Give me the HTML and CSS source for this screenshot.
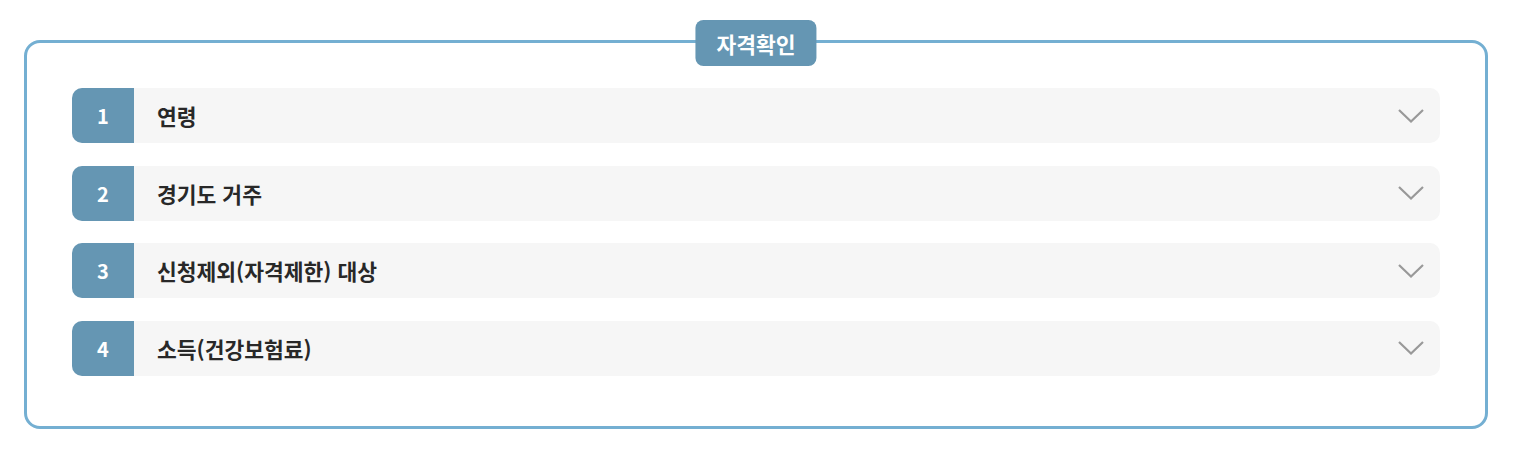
FILE: index.html
```html
<!DOCTYPE html>
<html lang="ko">
<head>
  <meta charset="UTF-8">
  <meta name="viewport" content="width=device-width, initial-scale=1.0">
  <title>자격확인</title>
  <link rel="stylesheet" href="styles.css">
</head>
<body>
  <main class="main">
    <section class="check-box">
      <h2 class="check-title">자격확인</h2>

      <div class="check-list">
        <div class="check-item">
          <span class="check-num">1</span>
          <span class="check-label">연령</span>
          <svg class="check-arrow" width="26" height="14" viewBox="0 0 26 14"><path d="M1 1 L13 12.5 L25 1" fill="none" stroke="#999999" stroke-width="2.2"/></svg>
        </div>
        <div class="check-item">
          <span class="check-num">2</span>
          <span class="check-label">경기도 거주</span>
          <svg class="check-arrow" width="26" height="14" viewBox="0 0 26 14"><path d="M1 1 L13 12.5 L25 1" fill="none" stroke="#999999" stroke-width="2.2"/></svg>
        </div>
        <div class="check-item">
          <span class="check-num">3</span>
          <span class="check-label">신청제외(자격제한) 대상</span>
          <svg class="check-arrow" width="26" height="14" viewBox="0 0 26 14"><path d="M1 1 L13 12.5 L25 1" fill="none" stroke="#999999" stroke-width="2.2"/></svg>
        </div>
        <div class="check-item">
          <span class="check-num">4</span>
          <span class="check-label">소득(건강보험료)</span>
          <svg class="check-arrow" width="26" height="14" viewBox="0 0 26 14"><path d="M1 1 L13 12.5 L25 1" fill="none" stroke="#999999" stroke-width="2.2"/></svg>
        </div>
      </div>
    </section>
  </main>
</body>
</html>
```

FILE: styles.css
```css
body {
  font-family: "Noto Sans CJK KR", "Noto Sans", sans-serif;
  margin: 0;
  padding: 0;
  background: #ffffff;
  color: #282828;
}

.main {
  padding: 40px 38px 22px 24px;
}

/* Box */
.check-box {
  position: relative;
  border: 3px solid #74afd2;
  border-radius: 16px;
  padding: 45px 45px 50px 45px;
}

.check-title {
  position: absolute;
  top: -23px;
  left: 50%;
  transform: translateX(-50%);
  margin: 0;
  height: 46px;
  padding: 0 21px;
  display: flex;
  align-items: center;
  background: #6596b3;
  border-radius: 8px;
  color: #ffffff;
  font-size: 21.5px;
  font-weight: 700;
  white-space: nowrap;
}

/* List */
.check-list {
  display: flex;
  flex-direction: column;
  gap: 22.6px;
}

.check-item {
  display: flex;
  align-items: center;
  height: 55px;
  background: #f6f6f6;
  border-radius: 10px;
  overflow: hidden;
}

.check-num {
  flex: 0 0 62px;
  height: 100%;
  display: flex;
  align-items: center;
  justify-content: center;
  background: #6596b3;
  color: #ffffff;
  font-size: 20px;
  font-weight: 700;
}

.check-label {
  flex: 1;
  padding-left: 23px;
  font-size: 21.5px;
  font-weight: 600;
}

.check-arrow {
  margin-right: 16px;
}
```
